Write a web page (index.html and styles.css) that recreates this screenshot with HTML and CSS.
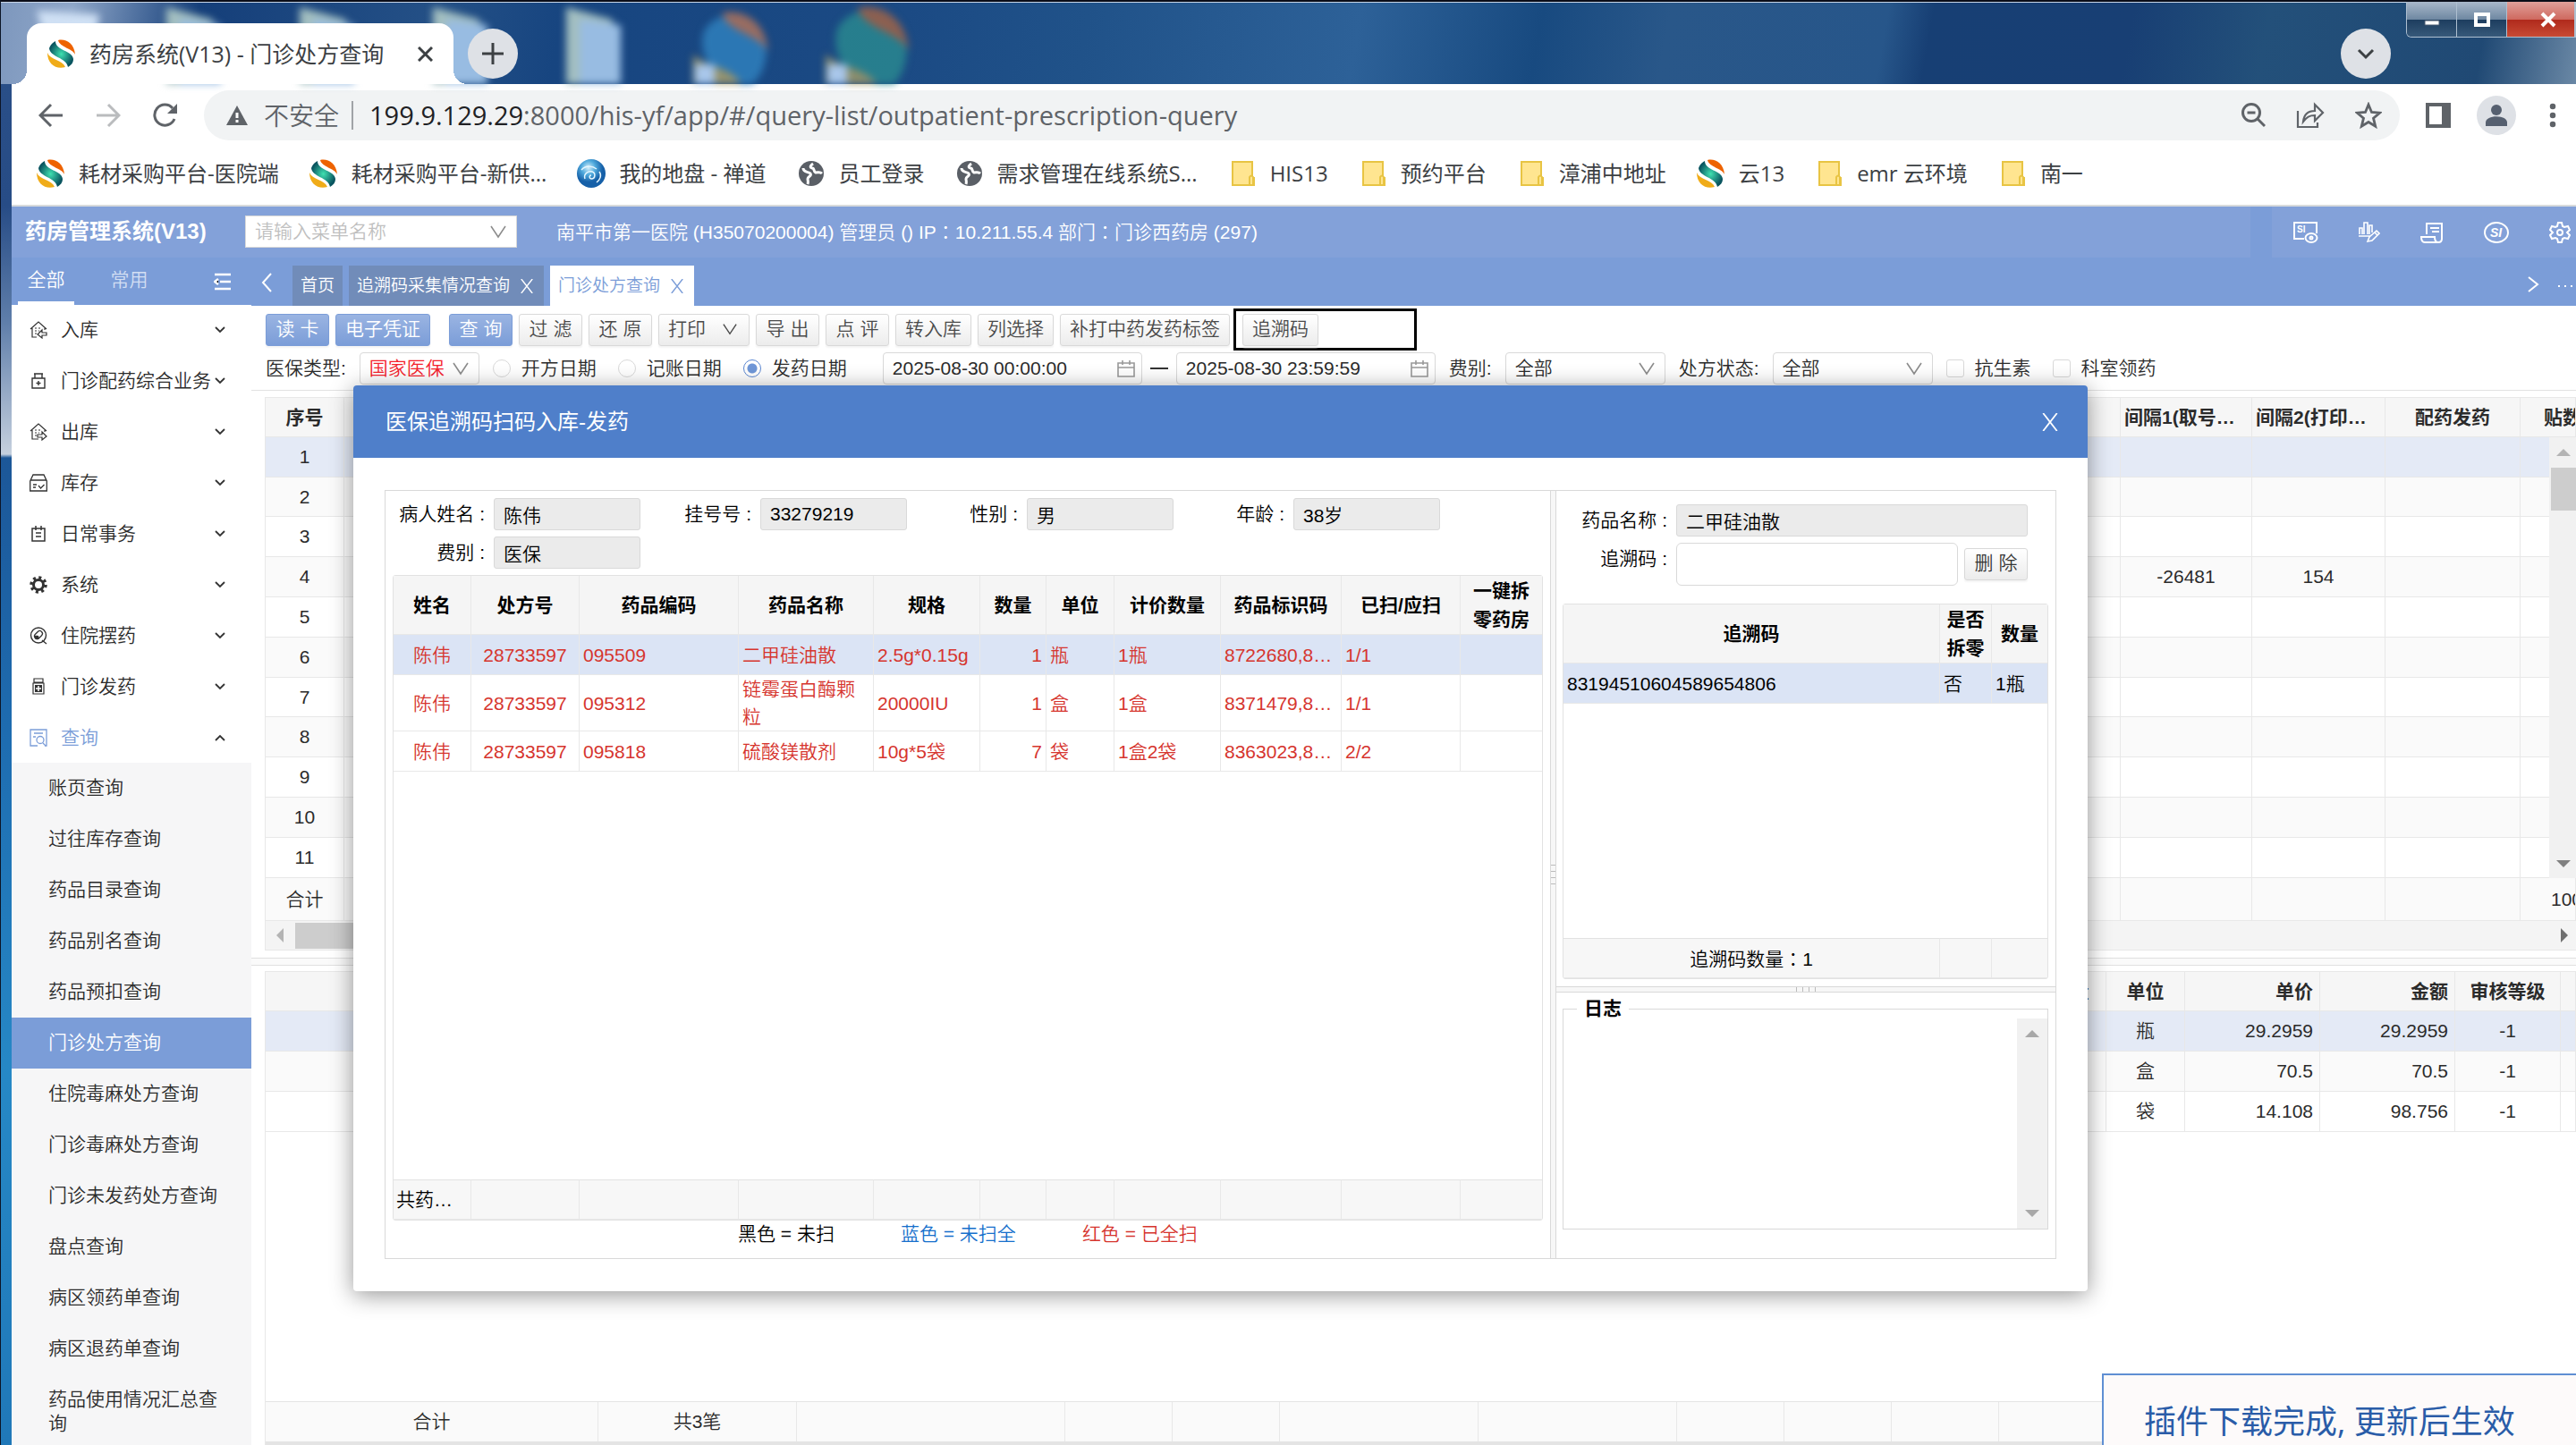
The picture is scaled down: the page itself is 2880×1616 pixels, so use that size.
FILE: index.html
```html
<!DOCTYPE html>
<html lang="zh-CN">
<head>
<meta charset="utf-8">
<title>药房系统(V13) - 门诊处方查询</title>
<link rel="stylesheet" href="styles.css">
</head>
<body>
<svg class="defs" aria-hidden="true">
  <defs>
    <radialGradient id="teal"><stop offset="0" stop-color="#3fe0b0"/><stop offset="1" stop-color="#0a5560"/></radialGradient>
    <radialGradient id="sea" cx=".4" cy=".3"><stop offset="0" stop-color="#d5f0fb"/><stop offset=".5" stop-color="#4fa9dc"/><stop offset="1" stop-color="#1660a8"/></radialGradient>
    <symbol id="logo" viewBox="0 0 32 32"><path d="M12 1C20-1 30 4 31 17C28 10 14 9 12 1Z" fill="#ee6300"/><path d="M9 2C9 13 28 12 29 22C29 27 26 29 23 31C21 20 3 20 2 10C4 5 7 3 9 2Z" fill="url(#teal)"/><path d="M0 15C3 23 17 23 20 31C10 34 0 28 0 15Z" fill="#f0ac19"/></symbol>
    <symbol id="globe" viewBox="0 0 32 32"><circle cx="16" cy="16" r="14" fill="#5a5f66"/><path d="M7 10c0 5 6 4 8 6 2 3-3 3-3 6 0 2 1 3 0 6M18 5c-3 2-4 4-1 5 3 0 1 4 4 5 3 0 5-1 7 1" fill="none" stroke="#fff" stroke-width="3"/></symbol>
    <symbol id="wave" viewBox="0 0 32 32"><circle cx="16" cy="16" r="16" fill="url(#sea)"/><path d="M5 12c6-6 13-4 17-1M9 22c-2-6 4-9 8-8s4 8-1 8c-3-1-2-4 0-4M25 14c3 4 1 9-3 12" fill="none" stroke="#e7f7ff" stroke-width="1.500"/></symbol>
    <symbol id="folder" viewBox="0 0 32 32"><path d="M5 3h22v18h2v8H5Z" fill="#ffe590" stroke="#e8c443" stroke-width="2"/><path d="M24 28v-8q2-3 4 0v8" fill="#ffe590" stroke="#e8c443" stroke-width="2"/></symbol>
    <symbol id="down" viewBox="0 0 12 12"><path d="M1 3l5 5 5-5" fill="none" stroke="currentColor" stroke-width="1.8"/></symbol>
    <symbol id="vee" viewBox="0 0 18 18"><path d="M1 3l8 12 8-12" fill="none" stroke="currentColor" stroke-width="1.6"/></symbol>
    <symbol id="ex" viewBox="0 0 18 18"><path d="M2 0l14 18M16 0L2 18" fill="none" stroke="currentColor" stroke-width="1.6"/></symbol>
    <symbol id="cal" viewBox="0 0 20 20"><path d="M1 4h18v15H1ZM1 9h18M6 1v5M14 1v5" fill="none" stroke="#999" stroke-width="1.6"/></symbol>
    <symbol id="housein" viewBox="0 0 20 20"><path d="M1 9l9-8 9 8M3 8v10h5M17 8v2M6 8h2m2 0h2M6 11h2m2 0h1M6 14h2M14 10l-5 5 5 4v-3h5v-3h-5Z" fill="none" stroke="currentColor" stroke-width="1.2"/></symbol>
    <symbol id="houseout" viewBox="0 0 20 20"><path d="M1 9l9-8 9 8M3 8v10h7M17 8v2M6 8h2m2 0h2M6 11h2m2 0h1M6 14h2M14 10l5 5-5 4v-3H9v-3h5Z" fill="none" stroke="currentColor" stroke-width="1.2"/></symbol>
    <symbol id="med" viewBox="0 0 20 20"><path d="M3 7h14v11H3ZM6 7V2h8v5M5 2h10M10 10v5M7.500 12.500h5" fill="none" stroke="currentColor" stroke-width="1.4"/></symbol>
    <symbol id="box" viewBox="0 0 20 20"><path d="M0.700 8L4 1h12l3.300 7v11H.7ZM.7 7h18.600M4 12h4M4 15h3M10 13l2.500 3 4-4" fill="none" stroke="currentColor" stroke-width="1.300"/></symbol>
    <symbol id="note" viewBox="0 0 20 20"><path d="M3 4h14v14H3ZM7 1v5M13 1v5M7 9h6M7 13h6" fill="none" stroke="currentColor" stroke-width="1.5"/></symbol>
    <symbol id="cog" viewBox="0 0 20 20"><circle cx="10" cy="10" r="5.500" fill="none" stroke="currentColor" stroke-width="3"/><circle cx="10" cy="10" r="8" fill="none" stroke="currentColor" stroke-width="3.500" stroke-dasharray="3 3.283"/></symbol>
    <symbol id="pill" viewBox="0 0 20 20"><circle cx="10" cy="9.500" r="8.500" fill="none" stroke="currentColor" stroke-width="1.400"/><path d="M14 15l5 4" stroke="currentColor" stroke-width="1.500"/><path d="M6 13c-2-3 1-4 4-3l1 3c-1 1-4 2-5 0Z" fill="currentColor"/><rect x="5" y="6" width="10" height="6" rx="3" transform="rotate(-45 10 9)" fill="none" stroke="currentColor" stroke-width="1.300"/></symbol>
    <symbol id="jar" viewBox="0 0 20 20"><path d="M5 1h10v4H5ZM4 6h12v12H4Z" fill="none" stroke="currentColor" stroke-width="1.200"/><path d="M6 8h8v8H6Z" fill="currentColor"/><path d="M10 9v6M7 12h6" stroke="#fff" stroke-width="1.500"/></symbol>
    <symbol id="find" viewBox="0 0 20 20"><path d="M9 19H1V1h18v18h-2M5 5h10M4 9h3" fill="none" stroke="currentColor" stroke-width="1.300"/><circle cx="12" cy="12.500" r="4" fill="none" stroke="currentColor" stroke-width="1.300"/><path d="M15 16l3 3" stroke="currentColor" stroke-width="1.300"/></symbol>
  </defs>
</svg>

<div class="titlebar">
  <svg class="wallpaper" width="1040" height="92" viewBox="0 0 1040 92" aria-hidden="true">
    <path d="M40 10l70 4-5 30H50Z" fill="#cfe0f4"/>
    <g id="f"><path d="M185 6l52 14v90h-52Z" fill="#a3bfc0"/><path d="M200 20l46 6v80h-46Z" fill="#98bce2"/></g>
    <use href="#f" x="149"/><use href="#f" x="298"/><use href="#f" x="447"/>
    <g transform="translate(774 10) scale(2.700)" opacity=".85"><path d="M4 10C6 2 20-2 27 6C33 14 30 28 23 31C12 30 2 22 4 10Z" fill="#2f80be"/><path d="M12 1C20-1 30 4 31 17C28 10 14 9 12 1Z" fill="#b0745c"/><path d="M0 18C3 23 17 23 20 31H0Z" fill="#aba06c"/></g>
    <g transform="translate(922 4) scale(3)" opacity=".85"><path d="M4 10C6 2 20-2 27 6C33 14 30 28 23 31C12 30 2 22 4 10Z" fill="#2a8890"/><path d="M12 1C20-1 30 4 31 17C28 10 14 9 12 1Z" fill="#a06448"/><path d="M0 18C3 23 17 23 20 31H0Z" fill="#a09a68"/></g>
    <path d="M776 70h22v22h-22ZM924 70h22v22h-22Z" fill="#a8c6ea"/>
  </svg>
  <div class="tab">
    <svg width="32" height="32"><use href="#logo"/></svg>
    <span>药房系统(V13) - 门诊处方查询</span>
    <button class="plain" aria-label="关闭标签页"><svg width="17" height="17" viewBox="0 0 17 17"><path d="M1 1l15 15M16 1L1 16" stroke="#3c4043" stroke-width="3"/></svg></button>
  </div>
  <button class="round" aria-label="新标签页"><svg width="24" height="24" viewBox="0 0 24 24"><path d="M12 0v24M0 12h24" stroke="#3c4043" stroke-width="3"/></svg></button>
  <button class="round search" aria-label="搜索标签页"><svg width="20" height="20" viewBox="0 0 20 20"><path d="M2 6l8 8 8-8" fill="none" stroke="#3c4043" stroke-width="3"/></svg></button>
  <div class="winctl">
    <button aria-label="最小化"><svg width="20" height="18" viewBox="0 0 20 18"><path d="M2 10h16v5H2Z" fill="#fff" stroke="#44566e"/></svg></button>
    <button aria-label="最大化"><svg width="20" height="18" viewBox="0 0 20 18"><path d="M3 3h14v12H3Z" fill="none" stroke="#fff" stroke-width="4"/></svg></button>
    <button class="close" aria-label="关闭"><svg width="22" height="18" viewBox="0 0 22 18"><path d="M4 2l14 14M18 2L4 16" stroke="#fff" stroke-width="4"/></svg></button>
  </div>
</div>

<div class="chrome">
  <div class="navbar">
    <button class="plain" aria-label="后退"><svg width="28" height="28" viewBox="0 0 28 28"><path d="M27 14H3M14 2L2 14l12 12" fill="none" stroke="#5f6368" stroke-width="3"/></svg></button>
    <button class="plain" aria-label="前进"><svg width="28" height="28" viewBox="0 0 28 28"><path d="M1 14h24M14 2l12 12-12 12" fill="none" stroke="#babcbe" stroke-width="3"/></svg></button>
    <button class="plain" aria-label="重新加载"><svg width="28" height="28" viewBox="0 0 28 28"><path d="M24 18A11.500 11.500 0 1 1 22 6" fill="none" stroke="#5f6368" stroke-width="3"/><path d="M27 1v11H16Z" fill="#5f6368"/></svg></button>
    <div class="omnibox">
      <svg width="24" height="22" viewBox="0 0 24 22"><path d="M12 0l12 22H0Z" fill="#5f6368"/><path d="M12 8v6M12 16v3" stroke="#fff" stroke-width="3"/></svg>
      <span class="unsafe">不安全</span>
      <span class="url"><b>199.9.129.29</b>:8000/his-yf/app/#/query-list/outpatient-prescription-query</span>
      <svg width="28" height="28" viewBox="0 0 28 28"><circle cx="12" cy="11" r="9.500" fill="none" stroke="#5f6368" stroke-width="3"/><path d="M7.500 11h9M19 18l8 8" stroke="#5f6368" stroke-width="3"/></svg>
      <svg width="32" height="30" viewBox="0 0 32 30"><path d="M2 10v18h22v-5M8 22c1-9 6-12 13-12V3l9 9-9 9v-6c-6 0-9 2-13 7Z" fill="none" stroke="#5f6368" stroke-width="2.200"/></svg>
      <svg width="30" height="30" viewBox="0 0 30 30"><path d="M15 3l3.500 8.500 9 .7-7 6 2.200 9L15 22.500 7.300 27.200l2.200-9-7-6 9-.7Z" fill="none" stroke="#5f6368" stroke-width="2.800"/></svg>
    </div>
    <svg width="30" height="30" viewBox="0 0 30 30"><path d="M1 1h28v28H1Z" fill="#5f6368"/><path d="M5 5h14v20H5Z" fill="#fff"/></svg>
    <svg class="avatar" width="44" height="44" viewBox="0 0 44 44"><circle cx="22" cy="22" r="22" fill="#dee1e6"/><circle cx="22" cy="16" r="6" fill="#566070"/><path d="M10 34v-4c0-9 24-9 24 0v4Z" fill="#566070"/></svg>
    <svg width="8" height="28" viewBox="0 0 8 28"><path d="M4 4h0M4 14h0M4 24h0" stroke="#5f6368" stroke-width="6.500" stroke-linecap="round"/></svg>
  </div>
  <nav class="bookmarks">
    <a href="#"><svg width="32" height="32"><use href="#logo"/></svg>耗材采购平台-医院端</a>
    <a href="#"><svg width="32" height="32"><use href="#logo"/></svg>耗材采购平台-新供...</a>
    <a href="#"><svg width="32" height="32"><use href="#wave"/></svg>我的地盘 - 禅道</a>
    <a href="#"><svg width="32" height="32"><use href="#globe"/></svg>员工登录</a>
    <a href="#"><svg width="32" height="32"><use href="#globe"/></svg>需求管理在线系统S...</a>
    <a href="#"><svg width="32" height="32"><use href="#folder"/></svg>HIS13</a>
    <a href="#"><svg width="32" height="32"><use href="#folder"/></svg>预约平台</a>
    <a href="#"><svg width="32" height="32"><use href="#folder"/></svg>漳浦中地址</a>
    <a href="#"><svg width="32" height="32"><use href="#logo"/></svg>云13</a>
    <a href="#"><svg width="32" height="32"><use href="#folder"/></svg>emr 云环境</a>
    <a href="#"><svg width="32" height="32"><use href="#folder"/></svg>南一</a>
  </nav>
</div>

<div class="app">
  <header class="topbar">
    <div class="topinfo">
      <h1>药房管理系统(V13)</h1>
      <div class="pick menu"><select aria-label="菜单名称"><option>请输入菜单名称</option></select><svg width="18" height="18"><use href="#vee"/></svg></div>
      <span>南平市第一医院 (H35070200004) 管理员 () IP<i lang="zh-TW">：</i>10.211.55.4 部门<i lang="zh-TW">：</i>门诊西药房 (297)</span>
    </div>
    <div class="topicons">
      <button class="plain" aria-label="医保查看"><svg width="28" height="24" viewBox="0 0 28 24" fill="none" stroke="#fff" stroke-width="2"><path d="M12 19H1V1h25v12"/><ellipse cx="20" cy="18" rx="6.500" ry="5"/><circle cx="20" cy="18" r="1.500"/><text x="4" y="12" font-size="10" font-weight="700" fill="#fff" stroke="none">SI</text></svg></button>
      <button class="plain" aria-label="统计"><svg width="24" height="24" viewBox="0 0 24 24" fill="none" stroke="#fff" stroke-width="1.600"><path d="M1 14V7h3v7M6 14V1h4v13M12 14V4h3v8M0 16h13M10 22l2-5 8-7 3 3-8 8ZM18 12l3 3"/></svg></button>
      <button class="plain" aria-label="单据"><svg width="26" height="24" viewBox="0 0 26 24" fill="none" stroke="#fff" stroke-width="2"><path d="M7 14V2h17v17q0 4-4 4H5q-4 0-4-6h15q0 6 4 6M11 7h10M13 11h8"/></svg></button>
      <button class="plain" aria-label="医保"><svg width="28" height="24" viewBox="0 0 28 24" fill="none" stroke="#fff" stroke-width="2"><ellipse cx="14" cy="12" rx="13" ry="11"/><text x="7" y="17" font-size="14" font-weight="700" font-style="italic" fill="#fff" stroke="none">SI</text></svg></button>
      <button class="plain" aria-label="设置"><svg width="24" height="24" viewBox="0 0 24 24" fill="none" stroke="#fff" stroke-width="2"><path d="M10 1h4l1 4 2 1 4-1 2 4-3 3 3 3-2 4-4-1-2 1-1 4h-4l-1-4-2-1-4 1-2-4 3-3-3-3 2-4 4 1 2-1Z"/><circle cx="12" cy="12" r="3"/></svg></button>
    </div>
  </header>

  <div class="body">
    <aside class="side">
      <div class="sidetabs">
        <button class="plain on">全部</button><button class="plain">常用</button>
        <svg width="20" height="20" viewBox="0 0 20 20" stroke="#fff" stroke-width="2.500"><path d="M1 2h18M7 10h12M1 18h18M5 7l-4 3 4 3"/></svg>
      </div>
      <a href="#" class="item"><svg width="20" height="20"><use href="#housein"/></svg><span>入库</span><svg width="12" height="12"><use href="#down"/></svg></a>
      <a href="#" class="item"><svg width="20" height="20"><use href="#med"/></svg><span>门诊配药综合业务</span><svg width="12" height="12"><use href="#down"/></svg></a>
      <a href="#" class="item"><svg width="20" height="20"><use href="#houseout"/></svg><span>出库</span><svg width="12" height="12"><use href="#down"/></svg></a>
      <a href="#" class="item"><svg width="20" height="20"><use href="#box"/></svg><span>库存</span><svg width="12" height="12"><use href="#down"/></svg></a>
      <a href="#" class="item"><svg width="20" height="20"><use href="#note"/></svg><span>日常事务</span><svg width="12" height="12"><use href="#down"/></svg></a>
      <a href="#" class="item"><svg width="20" height="20"><use href="#cog"/></svg><span>系统</span><svg width="12" height="12"><use href="#down"/></svg></a>
      <a href="#" class="item"><svg width="20" height="20"><use href="#pill"/></svg><span>住院摆药</span><svg width="12" height="12"><use href="#down"/></svg></a>
      <a href="#" class="item"><svg width="20" height="20"><use href="#jar"/></svg><span>门诊发药</span><svg width="12" height="12"><use href="#down"/></svg></a>
      <a href="#" class="item open"><svg width="20" height="20"><use href="#find"/></svg><span>查询</span><svg class="up" width="12" height="12"><use href="#down"/></svg></a>
      <div class="sub">
        <a href="#">账页查询</a><a href="#">过往库存查询</a><a href="#">药品目录查询</a><a href="#">药品别名查询</a><a href="#">药品预扣查询</a><a href="#" class="cur">门诊处方查询</a><a href="#">住院毒麻处方查询</a><a href="#">门诊毒麻处方查询</a><a href="#">门诊未发药处方查询</a><a href="#">盘点查询</a><a href="#">病区领药单查询</a><a href="#">病区退药单查询</a><a href="#">药品使用情况汇总查询</a>
      </div>
    </aside>

    <main class="main">
      <div class="pagetabs">
        <svg class="prev" width="12" height="24" viewBox="0 0 12 24"><path d="M11 2L2 12l9 10" fill="none" stroke="#fff" stroke-width="2"/></svg>
        <a href="#">首页</a>
        <a href="#">追溯码采集情况查询<svg width="16" height="16"><use href="#ex"/></svg></a>
        <a href="#" class="on">门诊处方查询<svg width="16" height="16"><use href="#ex"/></svg></a>
        <svg class="next" width="14" height="18" viewBox="0 0 14 18"><path d="M2 1l10 8-10 8" fill="none" stroke="#fff" stroke-width="2"/></svg>
        <svg width="18" height="4" viewBox="0 0 18 4"><path d="M1 1h2v2H1ZM8 1h2v2H8ZM15 1h2v2h-2Z" fill="#fff"/></svg>
      </div>

      <div class="tools">
        <button class="btn pri">读 卡</button><button class="btn pri">电子凭证</button>
        <button class="btn pri apart">查 询</button><button class="btn">过 滤</button><button class="btn">还 原</button>
        <button class="btn print">打印<svg width="16" height="16"><use href="#vee"/></svg></button><button class="btn">导 出</button><button class="btn">点 评</button><button class="btn">转入库</button><button class="btn">列选择</button><button class="btn">补打中药发药标签</button>
        <div class="marked"><button class="btn">追溯码</button></div>
      </div>

      <form class="filters">
        <div class="field"><label for="ins">医保类型:</label><div class="pick red"><select id="ins"><option>国家医保</option></select><svg width="18" height="18"><use href="#vee"/></svg></div></div>
        <div class="radios">
          <label><input type="radio" name="d">开方日期</label><label><input type="radio" name="d">记账日期</label><label><input type="radio" name="d" checked>发药日期</label>
        </div>
        <div class="range">
          <div class="pick"><input type="text" aria-label="开始时间" value="2025-08-30 00:00:00"><svg width="20" height="20"><use href="#cal"/></svg></div>
          <span class="dash"></span>
          <div class="pick"><input type="text" aria-label="结束时间" value="2025-08-30 23:59:59"><svg width="20" height="20"><use href="#cal"/></svg></div>
        </div>
        <div class="field"><label for="fee">费别:</label><div class="pick mid"><select id="fee"><option>全部</option></select><svg width="18" height="18"><use href="#vee"/></svg></div></div>
        <div class="field"><label for="st">处方状态:</label><div class="pick mid"><select id="st"><option>全部</option></select><svg width="18" height="18"><use href="#vee"/></svg></div></div>
        <div class="radios"><label><input type="checkbox">抗生素</label><label><input type="checkbox">科室领药</label></div>
      </form>

      <section class="upper">
        <table class="list">
          <colgroup><col class="w88"><col><col class="w147"><col class="w147"><col class="w149"><col class="w151"><col class="w62"></colgroup>
          <thead><tr><th>序号</th><th></th><th></th><th class="near">间隔1(取号…</th><th class="near">间隔2(打印…</th><th>配药发药</th><th class="cut">贴数</th></tr></thead>
          <tbody>
            <tr class="sel"><td>1</td><td></td><td></td><td></td><td></td><td></td><td></td></tr>
            <tr><td>2</td><td></td><td></td><td></td><td></td><td></td><td></td></tr>
            <tr><td>3</td><td></td><td></td><td></td><td></td><td></td><td></td></tr>
            <tr><td>4</td><td></td><td></td><td>-26481</td><td>154</td><td></td><td></td></tr>
            <tr><td>5</td><td></td><td></td><td></td><td></td><td></td><td></td></tr>
            <tr><td>6</td><td></td><td></td><td></td><td></td><td></td><td></td></tr>
            <tr><td>7</td><td></td><td></td><td></td><td></td><td></td><td></td></tr>
            <tr><td>8</td><td></td><td></td><td></td><td></td><td></td><td></td></tr>
            <tr><td>9</td><td></td><td></td><td></td><td></td><td></td><td></td></tr>
            <tr><td>10</td><td></td><td></td><td></td><td></td><td></td><td></td></tr>
            <tr><td>11</td><td></td><td></td><td></td><td></td><td></td><td></td></tr>
          </tbody>
          <tfoot><tr><td>合计</td><td></td><td></td><td></td><td></td><td></td><td class="cut sum">100</td></tr></tfoot>
        </table>
        <div class="vbar"><i class="au"></i><b></b><i class="ad"></i></div>
        <div class="hbar"><i class="al"></i><b></b><i class="ar"></i></div>
      </section>
      <div class="split"></div>
      <section class="lower">
        <table class="detail">
          <colgroup><col><col class="w80"><col class="w88"><col class="w151"><col class="w151"><col class="w118"><col class="w17"></colgroup>
          <thead><tr><th></th><th>数量</th><th>单位</th><th class="r">单价</th><th class="r">金额</th><th>审核等级</th><th></th></tr></thead>
          <tbody>
            <tr class="sel"><td></td><td></td><td>瓶</td><td class="r">29.2959</td><td class="r">29.2959</td><td>-1</td><td></td></tr>
            <tr><td></td><td></td><td>盒</td><td class="r">70.5</td><td class="r">70.5</td><td>-1</td><td></td></tr>
            <tr><td></td><td></td><td>袋</td><td class="r">14.108</td><td class="r">98.756</td><td>-1</td><td></td></tr>
          </tbody>
        </table>
        <div class="total">
          <span class="t1">合计</span><span class="t2">共3笔</span><span class="t3"></span><span class="t4"></span><span class="t4"></span><span class="t2"></span><span class="t2"></span><span class="t4"></span><span class="t4"></span><span class="t4"></span><span class="t3"></span><span></span>
        </div>
      </section>
    </main>
  </div>

  <div class="dialog" role="dialog" aria-labelledby="dlg">
    <div class="dhead"><h2 id="dlg">医保追溯码扫码入库-发药</h2><button class="plain" aria-label="关闭"><svg width="20" height="20"><use href="#ex"/></svg></button></div>
    <div class="panel">
      <div class="left">
        <form class="patient">
          <div><label for="p1">病人姓名 :</label><input id="p1" value="陈伟" readonly></div>
          <div><label for="p2">挂号号 :</label><input id="p2" value="33279219" readonly></div>
          <div><label for="p3">性别 :</label><input id="p3" value="男" readonly></div>
          <div><label for="p4">年龄 :</label><input id="p4" value="38岁" readonly></div>
          <div><label for="p5">费别 :</label><input id="p5" value="医保" readonly></div>
        </form>
        <div class="gridbox">
          <table class="drugs">
            <colgroup><col class="c1"><col class="c2"><col class="c3"><col class="c4"><col class="c5"><col class="c6"><col class="c7"><col class="c5"><col class="c8"><col class="c9"><col class="c10"></colgroup>
            <thead><tr><th>姓名</th><th>处方号</th><th>药品编码</th><th>药品名称</th><th>规格</th><th>数量</th><th>单位</th><th>计价数量</th><th>药品标识码</th><th>已扫/应扫</th><th>一键拆零药房</th></tr></thead>
            <tbody>
              <tr class="sel"><td class="c">陈伟</td><td class="c">28733597</td><td>095509</td><td>二甲硅油散</td><td>2.5g*0.15g</td><td class="r">1</td><td>瓶</td><td>1瓶</td><td>8722680,8…</td><td>1/1</td><td></td></tr>
              <tr><td class="c">陈伟</td><td class="c">28733597</td><td>095312</td><td>链霉蛋白酶颗粒</td><td>20000IU</td><td class="r">1</td><td>盒</td><td>1盒</td><td>8371479,8…</td><td>1/1</td><td></td></tr>
              <tr><td class="c">陈伟</td><td class="c">28733597</td><td>095818</td><td>硫酸镁散剂</td><td>10g*5袋</td><td class="r">7</td><td>袋</td><td>1盒2袋</td><td>8363023,8…</td><td>2/2</td><td></td></tr>
            </tbody>
          </table>
          <table class="foot">
            <colgroup><col class="c1"><col class="c2"><col class="c3"><col class="c4"><col class="c5"><col class="c6"><col class="c7"><col class="c5"><col class="c8"><col class="c9"><col class="c10"></colgroup>
            <tbody><tr><td>共药…</td><td></td><td></td><td></td><td></td><td></td><td></td><td></td><td></td><td></td><td></td></tr></tbody>
          </table>
        </div>
        <div class="legend"><span>黑色 = 未扫</span><span class="blue">蓝色 = 未扫全</span><span class="redt">红色 = 已全扫</span></div>
      </div>
      <div class="vsplit"><i></i></div>
      <div class="right">
        <form class="trace">
          <div><label for="t1">药品名称 :</label><input id="t1" value="二甲硅油散" readonly></div>
          <div><label for="t2">追溯码 :</label><input id="t2" class="code"><button type="button" class="btn">删 除</button></div>
        </form>
        <div class="gridbox codes">
          <table>
            <colgroup><col><col class="k2"><col class="k3"></colgroup>
            <thead><tr><th>追溯码</th><th>是否拆零</th><th>数量</th></tr></thead>
            <tbody><tr class="sel"><td>83194510604589654806</td><td>否</td><td>1瓶</td></tr></tbody>
          </table>
          <table class="foot">
            <colgroup><col><col class="k2"><col class="k3"></colgroup>
            <tbody><tr><td class="c">追溯码数量<i lang="zh-TW">：</i>1</td><td></td><td></td></tr></tbody>
          </table>
        </div>
        <div class="hsplit"><i></i></div>
        <fieldset class="log"><legend>日志</legend><div><textarea aria-label="日志"></textarea><div class="logbar"><i class="au"></i><i class="ad"></i></div></div></fieldset>
      </div>
    </div>
  </div>
  <div class="toast">插件下载完成, 更新后生效</div>
</div>
</body>
</html>
```
FILE: styles.css
```css
* { box-sizing: border-box; }
html, body { height: 100%; }
body {
  margin: 0; overflow: hidden; display: flex; flex-direction: column;
  padding-left: 12px;
  font: 350 21px/30px "Liberation Sans", "Noto Sans CJK SC", sans-serif; color: #2b2b2b;
  background: linear-gradient(#2b5088 0, #274c86 230px, #5f7eaa 360px, #c5d0de 508px, #1c5798 512px, #1e6cb0 820px, #2688c6 1200px, #2078b8 1616px);
  border-left: 1px solid #0c1526;
}
button, input, select, textarea { font: inherit; color: inherit; }
a { color: inherit; text-decoration: none; }
svg { display: block; flex: none; }
h1, h2 { margin: 0; }
i { font-style: normal; font-family: "Noto Sans CJK TC", sans-serif; }
.defs { position: absolute; width: 0; height: 0; }
.plain { border: 0; background: none; padding: 0; }

/* browser frame */
.titlebar {
  height: 94px; flex: none; margin-left: -12px; padding-left: 29px; position: relative;
  display: flex; align-items: flex-end; border-top: 2px solid #0a0d18;
  background: linear-gradient(100deg, #7d97bd 0, #8ea6c8 80px, #153f7a 220px, #245086 480px, #174580 620px, #1b4a84 1000px, #205289 1200px, #2d6198 1500px, #184a80 1700px, #295789 1840px, #27568a 2080px, #173f74 2130px, #183f74 2350px, #23507a 2500px, #204974 2740px, #7d98b2 2880px);
  box-shadow: inset 0 1px 0 #c8d6e8;
}
.wallpaper { position: absolute; left: 0; top: 0; filter: blur(4px); }
.tab {
  position: relative; width: 477px; height: 68px; border-radius: 16px 16px 0 0; background: #fff;
  display: flex; align-items: center; gap: 15px; padding: 0 23px;
  font: 400 25px/32px "Open Sans", "Noto Sans CJK SC", sans-serif; color: #3c4043;
}
.tab span { flex: 1; white-space: nowrap; }
.tab::before, .tab::after { content: ""; position: absolute; bottom: 0; width: 16px; height: 16px; }
.tab::before { left: -16px; background: radial-gradient(circle at 0 0, transparent 16px, #fff 16px); }
.tab::after { right: -16px; background: radial-gradient(circle at 100% 0, transparent 16px, #fff 16px); }
.round { position: relative; width: 56px; height: 56px; margin: 0 0 6px 16px; border: 0; border-radius: 50%; background: #dee1e6; display: grid; place-items: center; }
.round.search { margin-left: auto; margin-right: 17px; }
.winctl { align-self: flex-start; display: flex; height: 40px; border: 1px solid #aebfd0; border-top: 0; border-radius: 0 0 0 6px; overflow: hidden; }
.winctl button { width: 56px; padding: 0; border: 0; border-right: 1px solid #aebfd0; display: grid; place-items: center; background: linear-gradient(#a9b8ca, #6f88a2 50%, #1d3d5f 52%, #37597a); }
.winctl .close { width: 76px; padding-left: 16px; background: linear-gradient(#e0a09a, #cf6a60 50%, #b02a1c 52%, #c84a34); }
.chrome { flex: none; height: 137px; background: #fff; border-bottom: 2px solid #d8dbdc; }
.navbar { display: flex; align-items: center; padding: 7px 22px 0 30px; }
.navbar > button { margin-right: 36px; }
.navbar > button:nth-of-type(3) { margin-right: 29px; }
.omnibox { flex: 1; height: 56px; border-radius: 28px; background: #f1f3f4; display: flex; align-items: center; padding: 0 20px 0 25px; font: 400 28px/40px "Open Sans", "Noto Sans CJK SC", sans-serif; color: #5f6368; }
.omnibox svg + svg { margin-left: 34px; }
.unsafe { margin-left: 18px; padding-right: 14px; line-height: 32px; border-right: 2px solid #a0a3a7; font-weight: 350; }
.url { flex: 1; padding-left: 18px; white-space: nowrap; font-size: 29px; }
.url b { font-weight: 400; color: #202124; }
.omnibox ~ svg { margin-left: 28px; }
.omnibox ~ svg:last-child { margin-left: 37px; }
.bookmarks { display: flex; gap: 34px; padding: 21px 28px 0; font: 400 24px/32px "Open Sans", "Noto Sans CJK SC", sans-serif; color: #3c4043; }
.bookmarks a { display: flex; gap: 15px; white-space: nowrap; }

/* application header */
.app { flex: 1; min-height: 0; position: relative; display: flex; flex-direction: column; overflow: hidden; background: #fff; }
.topbar { flex: none; height: 57px; display: flex; gap: 24px; background: #7b9dd8; color: #fff; }
.topinfo { flex: 1; display: flex; align-items: center; padding: 0 0 1px 15px; background: #83a1d9; white-space: nowrap; }
.topinfo h1 { width: 246px; font-size: 24px; line-height: 32px; font-weight: 700; }
.topicons { flex: none; width: 340px; background: #83a1d9; display: flex; align-items: center; justify-content: space-between; padding: 0 6px 0 24px; }
.pick { display: grid; align-items: center; height: 36px; }
.pick > * { grid-area: 1 / 1; }
.pick select, .pick input { appearance: none; width: 100%; height: 100%; margin: 0; padding: 0 10px; border: 1px solid #d9d9d9; border-radius: 4px; background: #fff; outline: 0; }
.pick svg { justify-self: end; margin-right: 12px; color: #8c8c8c; pointer-events: none; }
.menu { width: 304px; margin-right: 44px; }
.menu select { color: #bfbfbf; border-radius: 0; }
.body { flex: 1; min-height: 0; display: flex; }

/* sidebar */
.side { flex: none; width: 268px; background: #fff; }
.sidetabs { height: 53px; background: #7b9dd8; color: #fff; display: flex; align-items: center; padding-left: 7px; }
.sidetabs button { width: 63px; height: 53px; padding-bottom: 4px; }
.sidetabs .on { border-bottom: 4px solid #fff; padding: 0; }
.sidetabs button + button { margin-left: 30px; color: #d3dff3; }
.sidetabs svg { margin-left: 63px; }
.item { display: flex; align-items: center; height: 57px; padding: 0 29px 1px 20px; white-space: nowrap; }
.item span { flex: 1; margin-left: 15px; width: 150px; }
.item svg { color: #333; }
.item .up { transform: scaleY(-1); }
.open { height: 56px; }
.open, .open svg:first-child { color: #7b9dd8; }
.sub { background: #f6f6f7; height: 800px; }
.sub a { display: block; padding: 14px 36px 16px 41px; line-height: 27px; }
.sub .cur { background: #7b9dd8; color: #fff; }

/* work area */
.main { flex: 1; min-width: 0; display: flex; flex-direction: column; }
.pagetabs { flex: none; height: 54px; padding: 9px 3px 0 11px; background: #7b9dd8; display: flex; gap: 7px; align-items: center; font-size: 19px; white-space: nowrap; }
.pagetabs a { height: 45px; padding: 0 9px; display: flex; align-items: center; gap: 11px; background: #718cb9; color: #fff; }
.pagetabs a svg { margin-right: 2px; }
.pagetabs .on { background: #fff; color: #7b9dd8; }
.pagetabs .prev { margin: 0 16px 7px 0; }
.pagetabs .next { margin: 0 13px 4px auto; }
.tools { flex: none; display: flex; align-items: center; gap: 7px; height: 47px; margin-top: 3px; padding-left: 16px; }
.btn { height: 36px; min-width: 71px; padding: 0 10px 2px; border: 1px solid #d9d9d9; border-radius: 3px; background: linear-gradient(#fff, #ececec); box-shadow: 0 2px 2px #f4f4f4; line-height: 30px; white-space: nowrap; color: #4a4a4a; }
.pri { border-color: #7b9dd8; background: linear-gradient(#9ab4e2, #7b9dd8); color: #fff; }
.apart { margin-left: 14px; }
.print { display: flex; align-items: center; gap: 19px; padding-right: 13px; }
.marked { width: 205px; height: 47px; border: 3px solid #000; padding: 3px 7px; margin-left: -3px; display: flex; align-items: center; }
.filters { flex: none; display: flex; align-items: center; gap: 15px; margin-top: 2px; padding: 0 0 6px 16px; border-bottom: 1px solid #e2e2e2; white-space: nowrap; }
.filters .field { display: flex; align-items: center; gap: 15px; }
.red { width: 134px; }
.red select { color: #f5222d; }
.mid { width: 179px; }
.filters label { padding-bottom: 1px; }
.radios { display: flex; gap: 24px; }
.radios label { display: flex; align-items: center; gap: 12px; }
.radios input { appearance: none; width: 20px; height: 20px; margin: 0; border: 1px solid #d9d9d9; border-radius: 50%; background: #fff; }
.radios input[type="checkbox"] { border-radius: 3px; }
.radios input:checked { border-color: #5b87d2; background: radial-gradient(circle, #6f97d8 5px, #fff 6px); }
.range { display: flex; align-items: center; gap: 9px; margin-left: 25px; }
.range .pick { width: 290px; }
.range .pick svg { margin-right: 8px; }
.dash { width: 20px; height: 2px; background: #333; }

table { border-collapse: separate; border-spacing: 0; table-layout: fixed; width: 100%; }
th, td { padding: 0; border-right: 1px solid #e8e8e8; border-bottom: 1px solid #e8e8e8; text-align: center; overflow: hidden; white-space: nowrap; }
th { font-weight: 700; background: #f6f6f6; }
.r { text-align: right; padding-right: 7px; }
.c { text-align: center; }
.upper { flex: none; position: relative; margin: 7px 0 8px 15px; border: 1px solid #e8e8e8; border-right: 0; }
.list th { height: 44px; }
.list .near { text-align: left; padding-left: 4px; }
.list tbody td { height: 45px; }
.list tbody tr:nth-child(5n+2) td { height: 44px; }
.list tbody tr:nth-child(even) td, .detail tr:nth-child(even) td { background: #fafafa; }
.list tbody .sel td, .detail .sel td { background: #e4eaf6; }
.list tfoot td { height: 48px; background: #fafafa; }
.list .cut { text-align: left; padding-left: 26px; text-overflow: clip; }
.list .sum { padding-left: 34px; }
.w17 { width: 17px; } .w62 { width: 62px; } .w80 { width: 80px; } .w88 { width: 88px; } .w118 { width: 118px; }
.w147 { width: 147px; } .w149 { width: 149px; } .w151 { width: 151px; }
.vbar { position: absolute; right: 0; top: 44px; width: 30px; height: 493px; background: #f1f1f1; display: flex; flex-direction: column; align-items: center; padding: 13px 0 12px 2px; }
.vbar b { width: 28px; height: 48px; margin-top: 13px; background: #cdcdcd; }
.vbar .ad { margin-top: auto; }
.hbar { height: 32px; background: #f4f4f4; display: flex; align-items: center; padding: 2px 9px 2px 12px; }
.hbar b { width: 900px; height: 29px; margin-left: 13px; background: #cdcdcd; }
.au, .ad, .al, .ar { width: 0; height: 0; border: 8px solid transparent; }
.au { border-top: 0; border-bottom-color: #b4b4b4; }
.ad { border-bottom: 0; border-top-color: #808080; }
.al { border-left: 0; border-right-color: #b4b4b4; }
.ar { border-right: 0; border-left-color: #707070; margin-left: auto; }
.split { flex: none; height: 9px; background: #fafafa; border: solid #e0e0e0; border-width: 1px 0; }
.lower { flex: 1; min-height: 0; display: flex; flex-direction: column; justify-content: space-between; margin: 6px 0 0 15px; border: solid #e8e8e8; border-width: 1px 0 0 1px; }
.detail th { height: 44px; }
.detail td { height: 45px; }
.total { height: 49px; display: flex; border: 1px solid #e4e4e4; border-width: 1px 0 4px; background: #fafafa; line-height: 44px; text-align: center; }
.total span { border-right: 1px solid #e8e8e8; }
.t1 { width: 372px; } .t2 { width: 222px; } .t3 { width: 300px; } .t4 { width: 120px; }

/* dialog */
.dialog { position: absolute; left: 382px; right: 546px; top: 200px; background: #fff; color: #000; border-radius: 4px; box-shadow: 0 4px 26px rgba(0,0,0,.42); }
.dhead { height: 81px; padding: 0 32px 0 36px; border-radius: 4px 4px 0 0; background: #4f7fca; color: #fff; display: flex; align-items: center; justify-content: space-between; }
.dhead h2 { font-size: 24px; font-weight: 400; }
.panel { min-height: 860px; margin: 36px 35px 0; border: 1px solid #d9d9d9; display: flex; }
.dialog { padding-bottom: 36px; }
.left { flex: 1; min-width: 0; padding: 8px 8px 12px; display: flex; flex-direction: column; }
.patient { display: grid; grid-template-columns: repeat(4, 298px); gap: 7px 0; margin: 0 0 7px -8px; }
.patient div, .trace div { display: flex; align-items: center; gap: 10px; }
.patient label { width: 111px; text-align: right; padding-bottom: 1px; }
.patient input { width: 164px; }
.patient input, .trace input { height: 36px; padding: 0 10px; border: 1px solid #d9d9d9; border-radius: 3px; background: #ebebeb; outline: 0; }
.gridbox { flex: 1; display: flex; flex-direction: column; justify-content: space-between; border: 1px solid #e2e2e2; border-radius: 3px; }
.gridbox th { height: 66px; padding: 0 3px; line-height: 32px; white-space: normal; background: #f5f5f5; }
.gridbox th:last-child, .gridbox td:last-child { border-right: 0; }
.drugs th:last-child { padding: 0 12px; }
.gridbox td { height: 45px; padding: 0 4px; line-height: 31px; text-align: left; white-space: normal; }
.gridbox .r { text-align: right; }
.gridbox .c { text-align: center; padding: 0; }
.gridbox .sel td { background: #dbe4f5; }
.drugs tbody { color: #d6352e; }
.gridbox .foot td { height: 45px; background: #f7f7f7; border-top: 1px solid #e2e2e2; padding: 0 3px; white-space: nowrap; }
.c1 { width: 87px; } .c2 { width: 121px; } .c3 { width: 178px; } .c4 { width: 151px; } .c5 { width: 119px; } .c6 { width: 74px; }
.c7 { width: 76px; } .c8 { width: 135px; } .c9 { width: 133px; } .c10 { width: 91px; }
.legend { display: flex; gap: 74px; padding-left: 386px; line-height: 30px; }
.blue { color: #1670cc; }
.redt { color: #d6352e; }
.vsplit, .hsplit { flex: none; background: #f7f7f7; border: solid #d9d9d9; display: grid; place-items: center; }
.vsplit { width: 7px; border-width: 0 1px; }
.vsplit i { width: 5px; height: 22px; background: repeating-linear-gradient(#bbb 0 1px, transparent 1px 7px); }
.right { width: 558px; display: flex; flex-direction: column; }
.trace { padding: 15px 31px 20px 0; display: grid; gap: 7px; }
.trace label { flex: none; width: 124px; text-align: right; align-self: flex-start; line-height: 35px; }
.trace input { flex: 1; min-width: 0; }
.trace .code { height: 48px; background: #fff; border-radius: 6px; }
.trace .btn { margin-left: -3px; color: #333; }
.codes { flex: none; height: 420px; margin: 0 8px 0 7px; }
.gridbox.codes td { padding: 0 4px; }
.k2 { width: 58px; } .k3 { width: 62px; }
.gridbox.codes th { padding: 0 7px; }
.hsplit { height: 7px; margin-top: 8px; border-width: 1px 0; }
.hsplit i { width: 22px; height: 5px; background: repeating-linear-gradient(90deg, #bbb 0 1px, transparent 1px 7px); }
.log { margin: 7px 8px 0 7px; padding: 0; min-width: 0; border: 1px solid #d9d9d9; }
.log legend { margin-left: 15px; padding: 0 8px; line-height: 22px; font-weight: 700; }
.log > div { display: flex; height: 235px; }
.log textarea { flex: 1; border: 0; resize: none; outline: 0; }
.logbar { width: 34px; background: #f1f1f1; display: flex; flex-direction: column; align-items: center; justify-content: space-between; padding: 13px 0; }
.logbar .ad { border-top-color: #a8a8a8; }
.logbar .au { border-bottom-color: #a8a8a8; }

.toast { position: absolute; right: 0; bottom: 0; width: 530px; height: 80px; padding: 24px 0 0 45px; border: 2px solid #5f8fd3; border-width: 2px 0 0 2px; background: #fdfafa; color: #2a5ca8; font: 400 36px/56px "Open Sans", "Noto Sans CJK SC", sans-serif; white-space: nowrap; }
```
